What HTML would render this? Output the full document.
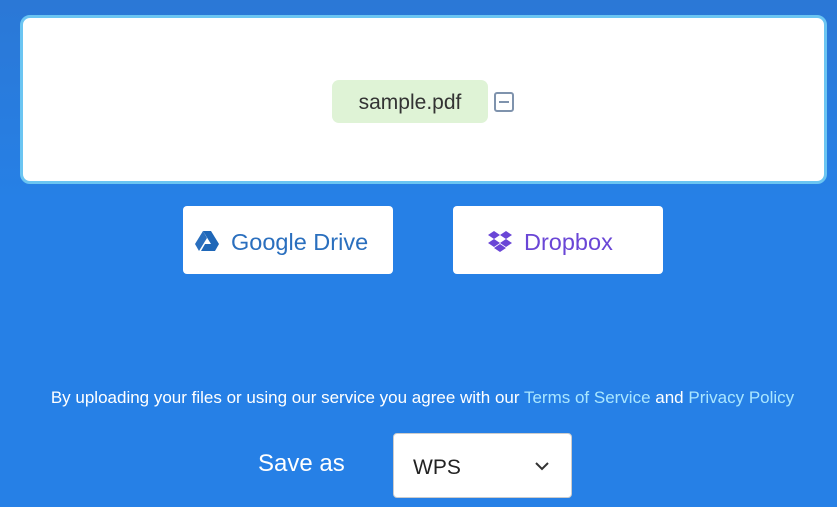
<!DOCTYPE html>
<html><head><style>
body{margin:0;width:837px;height:507px;overflow:hidden;background:linear-gradient(#2b78d6,#2680e6 40%,#2680e6);font-family:"Liberation Sans",sans-serif;position:relative}
.box{position:absolute;left:20px;top:15px;width:801px;height:163px;background:#fff;border:3px solid #6bc5f2;border-radius:10px;box-sizing:content-box}
.chip{position:absolute;left:332px;top:80px;width:156px;height:43px;background:#dff3d6;border-radius:7px;color:#333;font-size:21px;line-height:45px;text-align:center}
.min{position:absolute;left:494px;top:92px;width:20px;height:20px;border:2px solid #7f93ad;border-radius:3px;box-sizing:border-box}
.min:after{content:"";position:absolute;left:3px;right:3px;top:7px;height:2px;background:#7f93ad}
.btn{position:absolute;top:206px;width:210px;height:68px;background:#fff;border-radius:4px;font-size:23.5px;line-height:72px}
.terms{position:absolute;left:0;width:845px;top:388px;text-align:center;color:#fff;font-size:17px}
.terms span{color:#a9e6ff}
.save{position:absolute;left:258px;top:450px;color:#fff;font-size:24px}
.sel{position:absolute;left:393px;top:433px;width:179px;height:65px;background:#fff;border:1px solid #ccc;border-radius:4px;box-sizing:border-box;font-size:21px;line-height:67px;padding-left:19px;color:#222}
</style></head><body>
<div class="box"></div>
<div class="chip">sample.pdf</div>
<div class="min"></div>
<div class="btn" style="left:183px;color:#2a6fbe">
<svg style="position:absolute;left:12px;top:25px" width="24" height="20" viewBox="0 0 24 20"><path d="M8 0h8l8 13h-8z" fill="#1f67b8"/><path d="M8 0l4 7-8 13-4-7z" fill="#2a6fbe"/><path d="M6 20l4-7h14l-4 7z" fill="#1f67b8"/></svg>
<span style="position:absolute;left:48px">Google Drive</span></div>
<div class="btn" style="left:453px;color:#6a46d6">
<svg style="position:absolute;left:34px;top:25px" width="26" height="22" viewBox="0 0 26 22"><g fill="#6a46d6"><path d="M7 0l6 4-6 4-6-4z"/><path d="M19 0l6 4-6 4-6-4z"/><path d="M7 8l6 4-6 4-6-4z"/><path d="M19 8l6 4-6 4-6-4z"/><path d="M13 13l6 4-6 4-6-4z"/></g></svg>
<span style="position:absolute;left:71px">Dropbox</span></div>
<div class="terms">By uploading your files or using our service you agree with our <span>Terms of Service</span> and <span>Privacy Policy</span></div>
<div class="save">Save as</div>
<div class="sel">WPS<svg style="position:absolute;left:140px;top:27px" width="16" height="10" viewBox="0 0 16 10"><path d="M2 2l6 6 6-6" stroke="#333" stroke-width="2" fill="none"/></svg></div>
</body></html>
